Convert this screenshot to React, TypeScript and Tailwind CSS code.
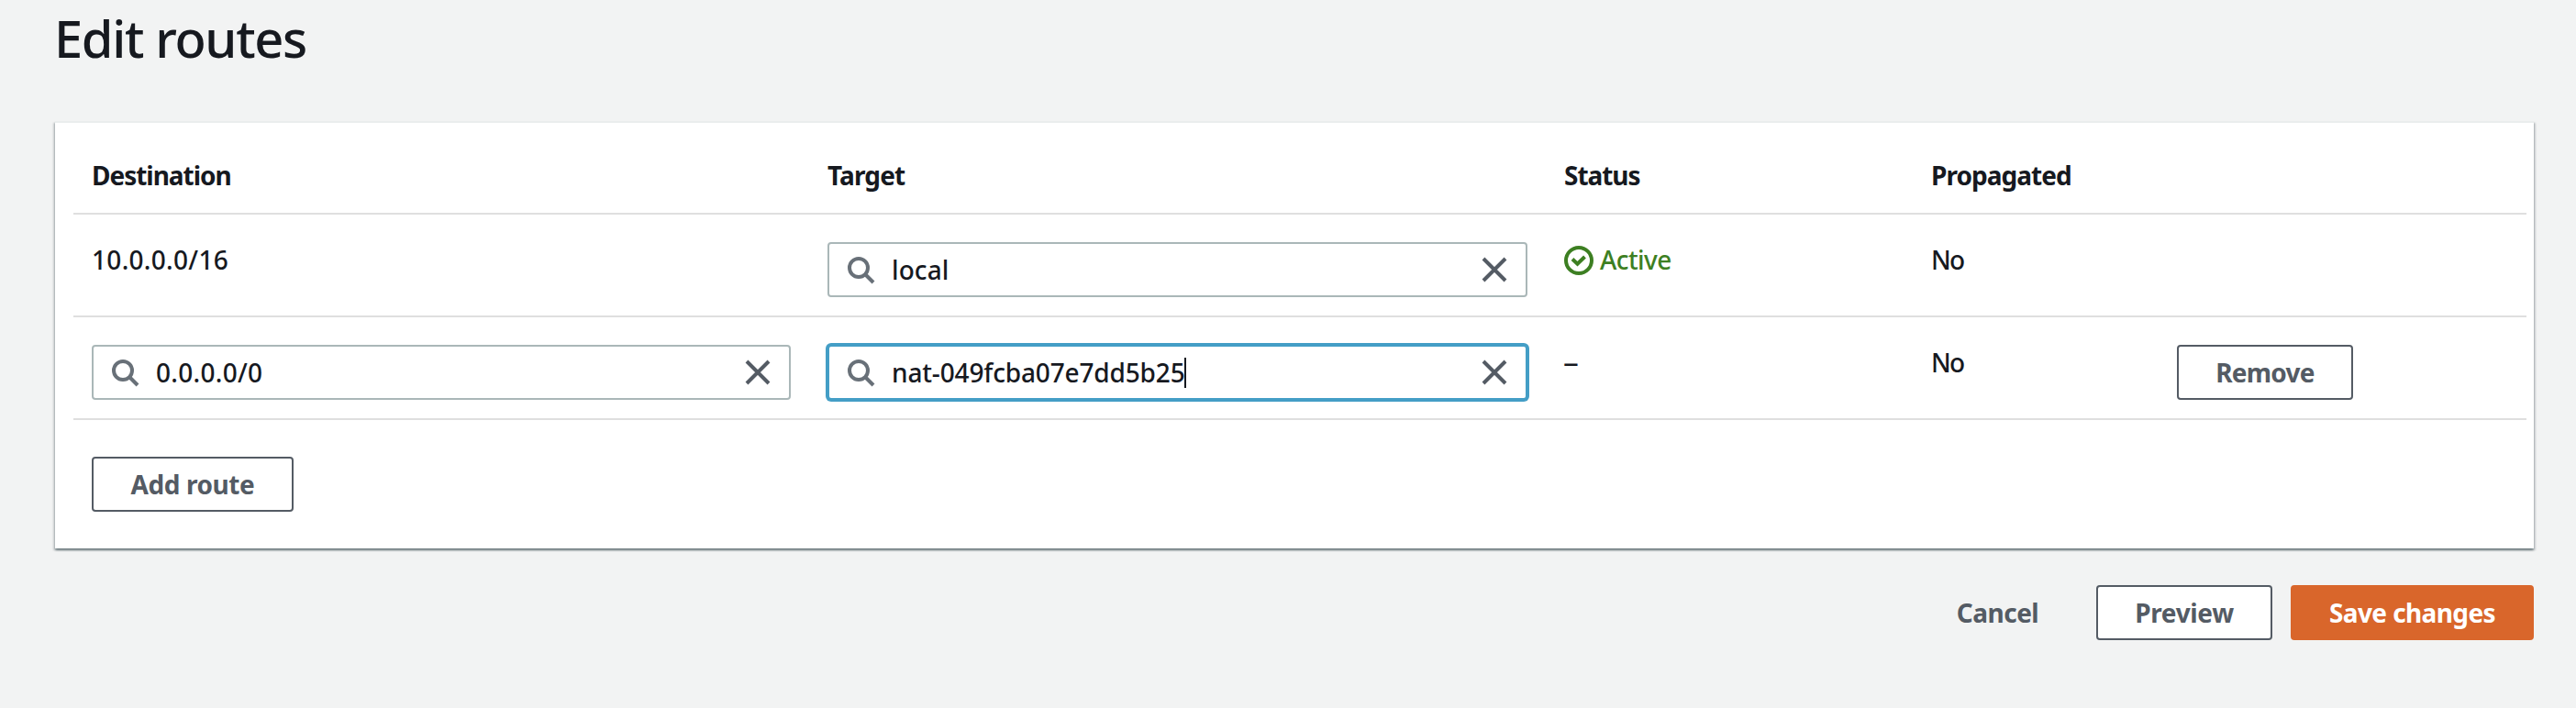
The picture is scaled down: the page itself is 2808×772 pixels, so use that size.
import type { ReactNode } from 'react';
import clsx from 'clsx';

function SearchIcon() {
  return (
    <svg viewBox="0 0 16 16" className="size-8 shrink-0" fill="none" stroke="#687078" strokeWidth="2">
      <circle cx="7" cy="7" r="5" />
      <path d="M15 15l-4.5-4.5" />
    </svg>
  );
}

function CloseIcon() {
  return (
    <svg viewBox="0 0 16 16" className="size-8 shrink-0" fill="none" stroke="#545b64" strokeWidth="2">
      <path d="M2 2l12 12M14 2L2 14" />
    </svg>
  );
}

function CheckCircleIcon() {
  return (
    <svg viewBox="0 0 32 32" className="size-8 shrink-0" fill="none" stroke="#3d7f22" strokeWidth="4">
      <circle cx="16" cy="16" r="14" />
      <path d="M9 14.5l5.5 5.2 8-7.7" />
    </svg>
  );
}

function SearchField({ value, tracking, focused }: { value: string; tracking: string; focused?: boolean }) {
  return (
    <div
      className={clsx(
        'flex h-[60px] items-center rounded-[4px] border-2 bg-white px-[18px]',
        focused ? 'border-[#449ec6] ring-2 ring-[#449ec6]' : 'border-[#aab7b8]',
      )}
    >
      <SearchIcon />
      <span className={clsx('ml-[18px]', tracking)}>{value}</span>
      {focused && <span className="-ml-px h-[33px] w-0.5 bg-[#16191f]" />}
      <span className="ml-auto flex">
        <CloseIcon />
      </span>
    </div>
  );
}

function Button({ className, children }: { className: string; children: ReactNode }) {
  return (
    <button
      type="button"
      className={clsx(
        'flex h-[60px] items-center justify-center rounded-[4px] border-2 font-bold whitespace-nowrap',
        className,
      )}
    >
      {children}
    </button>
  );
}

const outlined = 'border-[#545b64] bg-white text-[#545b64]';
const row = 'grid h-28 grid-cols-[802px_803px_400px_268px_1fr] border-b-2 border-[#dfdfdf]';
const text = 'px-5 pt-[27px]';
const field = 'px-5 pt-[30px]';

export default function App() {
  return (
    <div className="h-[772px] w-[2808px] bg-[#f2f3f3] pt-[6px] pr-[46px] pl-[60px] font-['Noto_Sans',sans-serif] text-[28px] leading-[44px] font-medium text-[#16191f]">
      <h1 className="-ml-px h-[126px] text-[56px] leading-[70px] font-medium tracking-[-1.35px]">Edit routes</h1>

      <section className="h-[466px] border-t-2 border-[#eaeded] bg-white pr-2 pl-5 shadow-[0_2px_2px_0_rgba(0,28,36,0.4),2px_2px_2px_0_rgba(0,28,36,0.15),-2px_2px_2px_0_rgba(0,28,36,0.15)]">
        <div className="grid h-[100px] grid-cols-[802px_803px_400px_268px_1fr] border-b-2 border-[#dfdfdf] pt-[35px] font-bold">
          <div className="px-5 tracking-[-1.03px]">Destination</div>
          <div className="px-5 tracking-[-0.87px]">Target</div>
          <div className="px-5 tracking-[-1.04px]">Status</div>
          <div className="px-5 tracking-[-0.96px]">Propagated</div>
        </div>

        <div className={row}>
          <div className={clsx(text, 'tracking-[0.3px]')}>10.0.0.0/16</div>
          <div className={field}>
            <SearchField value="local" tracking="tracking-[0.1px]" />
          </div>
          <div className={clsx(text, 'flex items-start gap-[7px] text-[#3d7f22]')}>
            <span className="mt-[7px] flex">
              <CheckCircleIcon />
            </span>
            <span className="tracking-[-0.6px]">Active</span>
          </div>
          <div className={clsx(text, 'tracking-[-1.8px]')}>No</div>
        </div>

        <div className={row}>
          <div className={field}>
            <SearchField value="0.0.0.0/0" tracking="tracking-[0.3px]" />
          </div>
          <div className={field}>
            <SearchField value="nat-049fcba07e7dd5b25" tracking="tracking-[-0.15px]" focused />
          </div>
          <div className={text}>
            <span className="-ml-px inline-block origin-left scale-x-[1.2]">–</span>
          </div>
          <div className={clsx(text, 'tracking-[-1.8px]')}>No</div>
          <div className={field}>
            <Button className={clsx(outlined, 'w-48 tracking-[-0.76px]')}>Remove</Button>
          </div>
        </div>

        <div className="px-5 pt-10">
          <Button className={clsx(outlined, 'w-[220px] tracking-[-0.42px]')}>Add route</Button>
        </div>
      </section>

      <div className="flex justify-end gap-5 pt-10">
        <Button className="w-[175px] border-transparent tracking-[-0.52px] text-[#545b64]">Cancel</Button>
        <Button className={clsx(outlined, 'w-48 tracking-[-0.34px]')}>Preview</Button>
        <Button className="w-[265px] border-[#d9662b] bg-[#d9662b] tracking-[-0.61px] text-white">Save changes</Button>
      </div>
    </div>
  );
}
